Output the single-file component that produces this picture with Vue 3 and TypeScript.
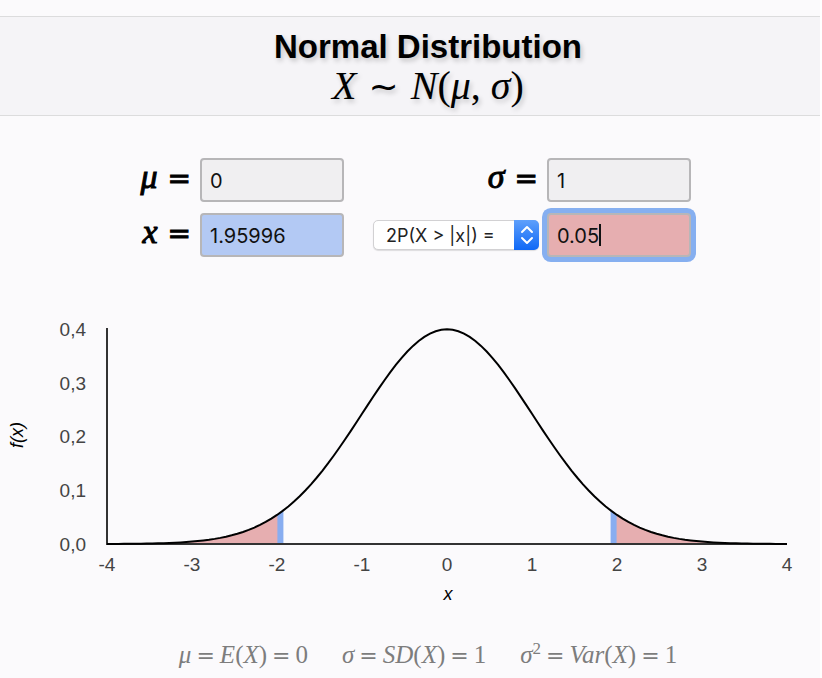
<script setup lang="ts">
import { computed, ref } from 'vue'

type Tail = 'right' | 'left' | 'both'

const mu = ref('0')
const sigma = ref('1')
const x = ref('1.95996')
const probability = ref('0.05')
const tail = ref<Tail>('both')

// Plot geometry in SVG units
const left = 107
const base = 244
const unitX = 85
const unitY = 538

const density = (z: number): number => Math.exp(-(z * z) / 2) / Math.sqrt(2 * Math.PI)
const px = (z: number): number => left + (z + 4) * unitX
const py = (d: number): number => base - d * unitY

function trace(from: number, to: number): string {
  const steps = 120
  const points: string[] = []
  for (let i = 0; i <= steps; i++) {
    const z = from + ((to - from) * i) / steps
    points.push(`${px(z).toFixed(2)},${py(density(z)).toFixed(2)}`)
  }
  return points.join(' L')
}

function region(from: number, to: number): string {
  return `M${px(from)},${base} L${trace(from, to)} L${px(to)},${base} Z`
}

const z = computed(() => Math.abs((Number(x.value) - Number(mu.value)) / (Number(sigma.value) || 1)))
const curve = `M${trace(-4, 4)}`
const half = 3 / unitX
const tails = computed(() => [region(-4, -z.value), region(z.value, 4)])
const markers = computed(() => [-z.value, z.value].map((v) => region(v - half, v + half)))

const xTicks = [-4, -3, -2, -1, 0, 1, 2, 3, 4]
const yTicks = [0, 0.1, 0.2, 0.3, 0.4]
const variance = computed(() => Number(sigma.value) ** 2)
</script>

<template>
  <main class="page">
    <header class="banner">
      <h1 class="title">Normal Distribution</h1>
      <p class="formula"><i>X</i><span class="op tilde">~</span><i>N</i>(<i>μ</i>,<i class="sigma">σ</i>)</p>
    </header>

    <form class="form" @submit.prevent>
      <label class="symbol" for="mu"><i>μ</i><span class="op">=</span></label>
      <input id="mu" v-model="mu" class="field" type="text" />
      <label class="symbol" for="sigma"><i>σ</i><span class="op">=</span></label>
      <input id="sigma" v-model="sigma" class="field" type="text" />

      <label class="symbol" for="x"><i>x</i><span class="op">=</span></label>
      <input id="x" v-model="x" class="field field-x" type="text" />
      <div class="picker">
        <select v-model="tail" class="select" aria-label="Probability type">
          <option value="right">P(X &gt; x) =</option>
          <option value="left">P(X &lt; x) =</option>
          <option value="both">2P(X &gt; |x|) =</option>
        </select>
        <svg class="arrows" viewBox="0 0 25 30" aria-hidden="true">
          <defs>
            <linearGradient id="blue" x1="0" y1="0" x2="0" y2="1">
              <stop offset="0" stop-color="#5fa0fb" />
              <stop offset="1" stop-color="#0f68f6" />
            </linearGradient>
          </defs>
          <path d="M0 0H20a5 5 0 0 1 5 5V25a5 5 0 0 1-5 5H0Z" fill="url(#blue)" />
          <path d="M8 12l5-5 5 5M8 18l5 5 5-5" fill="none" stroke="#fff" stroke-width="2" stroke-linecap="round" stroke-linejoin="round" />
        </svg>
      </div>
      <div class="active">
        <input id="p" v-model="probability" class="field field-p" type="text" aria-label="Probability" />
        <span class="caret"></span>
      </div>
    </form>

    <svg class="chart" viewBox="0 0 820 320" role="img" aria-label="Normal density curve">
      <path v-for="(d, i) in tails" :key="'t' + i" :d="d" fill="#e6aeb0" />
      <path v-for="(d, i) in markers" :key="'m' + i" :d="d" fill="#88adf0" />
      <path class="axis" :d="`M107 28V${base}H787`" />
      <path class="curve" :d="curve" />
      <text v-for="t in yTicks" :key="'y' + t" class="tick" x="86" :y="py(t) + 7" text-anchor="end">{{ t.toFixed(1).replace('.', ',') }}</text>
      <text v-for="t in xTicks" :key="'x' + t" class="tick" :x="px(t)" y="271" text-anchor="middle">{{ t }}</text>
      <text class="name" x="448" y="300" text-anchor="middle">x</text>
      <text class="name" transform="translate(23 135) rotate(-90)" text-anchor="middle">f(x)</text>
    </svg>

    <footer class="summary">
      <span><i>μ</i><span class="op">=</span><i>E</i>(<i>X</i>)<span class="op">=</span>{{ mu }}</span>
      <span><i>σ</i><span class="op">=</span><i>SD</i>(<i>X</i>)<span class="op">=</span>{{ sigma }}</span>
      <span><i>σ</i><sup>2</sup><span class="op">=</span><i>Var</i>(<i>X</i>)<span class="op">=</span>{{ variance }}</span>
    </footer>
  </main>
</template>

<style>
body {
  margin: 0;
  background: #fff;
}
</style>

<style scoped>
.page {
  box-sizing: border-box;
  min-height: 100vh;
  margin-right: 2px;
  padding-top: 16px;
  background: #fbfafc;
  color: #000;
  font-family: "Liberation Sans", Arial, sans-serif;
}
.banner {
  display: flex;
  flex-direction: column;
  align-items: center;
  box-sizing: border-box;
  height: 100px;
  padding: 10px 0 0 36px;
  border-top: 1px solid #dcdcdd;
  border-bottom: 1px solid #dcdcdd;
  background: #f5f4f7;
  text-shadow: 2px 3px 5px rgba(0, 0, 0, 0.2);
}
.title {
  margin: 0;
  font-size: 33px;
  line-height: 40px;
  font-weight: 700;
}
.formula {
  margin: 0;
  font: 40px/38px "Liberation Serif", serif;
}
.op {
  font-family: "DejaVu Sans", sans-serif;
  font-style: normal;
}
.tilde {
  margin: 0 12px;
  font-size: 36px;
  line-height: 0;
}
.sigma {
  margin-left: 10px;
}
.form {
  display: grid;
  grid-template-columns: 144px 144px 187px 144px;
  grid-auto-rows: 44px;
  justify-content: center;
  align-items: center;
  column-gap: 8px;
  row-gap: 11px;
  margin-top: 42px;
  padding-right: 81px;
}
.symbol {
  display: flex;
  align-items: baseline;
  justify-content: flex-end;
  gap: 10px;
  padding: 0 1px 4px 0;
  font: 34px/40px "Liberation Serif", serif;
  -webkit-text-stroke: 1px #000;
}
.symbol .op {
  font-size: 28px;
}
.field {
  box-sizing: border-box;
  width: 100%;
  height: 44px;
  padding: 2px 8px 0;
  border: 2px solid #b7b6b8;
  border-radius: 4px;
  outline: none;
  background: #f0eff1;
  color: #111;
  font: 20px Inter, sans-serif;
}
.field-x {
  background: #b3c9f4;
}
.field-p {
  display: block;
  background: #e6aeb0;
  box-shadow: 0 0 0 5px #86aff0;
  caret-color: transparent;
}
.active {
  position: relative;
}
.caret {
  position: absolute;
  top: 11px;
  left: 52px;
  width: 2px;
  height: 22px;
  background: #111;
}
.picker {
  position: relative;
  justify-self: end;
  width: 166px;
}
.select {
  display: block;
  box-sizing: border-box;
  width: 100%;
  height: 30px;
  padding: 0 28px 0 12px;
  border: 1px solid #d2d1d3;
  border-radius: 5px;
  appearance: none;
  background: #fff;
  box-shadow: 0 1px 1px rgba(0, 0, 0, 0.12);
  color: #222;
  font: 18px Inter, sans-serif;
}
.arrows {
  position: absolute;
  top: 0;
  right: 0;
  width: 25px;
  height: 30px;
  pointer-events: none;
}
.chart {
  display: block;
  width: 100%;
  margin-top: 43px;
}
.axis {
  fill: none;
  stroke: #333;
  stroke-width: 2;
}
.curve {
  fill: none;
  stroke: #000;
  stroke-width: 2;
}
.tick {
  fill: #444;
  font-size: 19px;
}
.name {
  fill: #000;
  font-size: 18px;
  font-style: italic;
}
.summary {
  display: flex;
  justify-content: center;
  gap: 34px;
  padding: 20px 0 0 36px;
  color: #7d7d7d;
  font: 25px/30px "Liberation Serif", serif;
}
.summary .op {
  margin: 0 5px;
  font-size: 22px;
}
.summary sup {
  font-size: 17px;
  line-height: 0;
}
</style>
